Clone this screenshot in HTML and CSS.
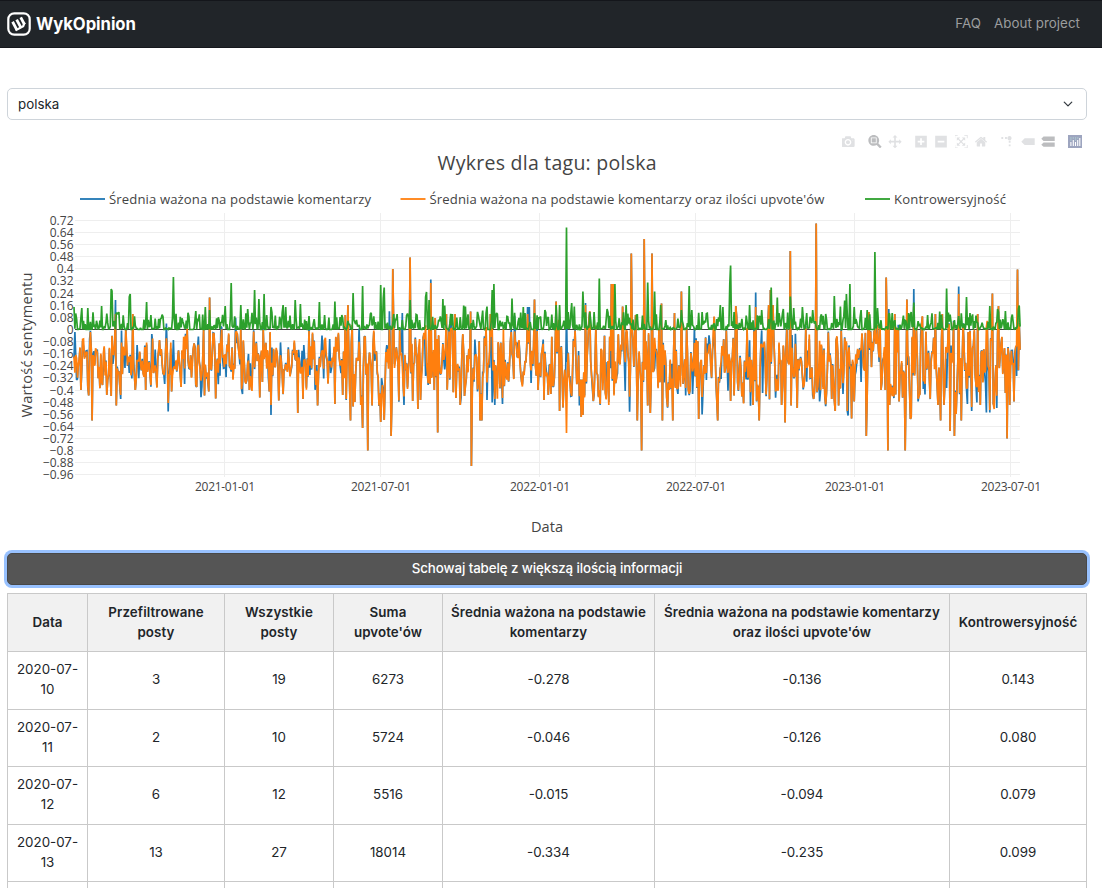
FILE: index.html
```html
<!DOCTYPE html>
<html lang="pl">
<head>
<meta charset="utf-8">
<title>WykOpinion</title>
<link rel="stylesheet" href="styles.css">
</head>
<body>
<nav class="navbar">
  <a class="brand">
    <svg class="brand-logo" viewBox="0 0 24 24"><rect x="1.3" y="1.3" width="21.4" height="21.4" rx="6" fill="none" stroke="#fff" stroke-width="2.2"/><g transform="rotate(-28 12 12)" fill="none" stroke="#fff" stroke-width="2.8"><path d="M7.4 7V16.4M12 7V16.4M16.6 7V15"/><path d="M6 16H14.6L17.6 13.4" stroke-width="2.2"/></g></svg>
    <span class="brand-name">WykOpinion</span>
  </a>
  <div class="nav-links"><a class="faq">FAQ</a><a class="about">About project</a></div>
</nav>
<main class="content">
  <div class="select"><span>polska</span><svg class="chevron" viewBox="0 0 16 16"><path d="m2 5 6 6 6-6" fill="none" stroke="#343a40" stroke-width="2" stroke-linecap="round" stroke-linejoin="round"/></svg></div>
  <section class="plot">
    <div class="modebar">
      <div class="group"><svg viewBox="0 0 1000 1000"><path transform="matrix(1 0 0 -1 0 850)" d="m500 450c-83 0-150-67-150-150 0-83 67-150 150-150 83 0 150 67 150 150 0 83-67 150-150 150z m400 150h-120c-16 0-34 13-39 29l-31 93c-6 15-23 28-40 28h-340c-16 0-34-13-39-28l-31-94c-6-15-23-28-40-28h-120c-55 0-100-45-100-100v-450c0-55 45-100 100-100h800c55 0 100 45 100 100v450c0 55-45 100-100 100z m-400-550c-138 0-250 112-250 250 0 138 112 250 250 250 138 0 250-112 250-250 0-138-112-250-250-250z m365 380c-19 0-35 16-35 35 0 19 16 35 35 35 19 0 35-16 35-35 0-19-16-35-35-35z"/></svg></div>
      <div class="group">
        <svg class="active" viewBox="0 0 1000 1000"><path transform="matrix(1 0 0 -1 0 850)" d="m1000-25l-250 251c40 63 63 138 63 218 0 224-182 406-407 406-224 0-406-182-406-406s183-406 407-406c80 0 155 22 218 62l250-250 125 125z m-812 250l0 438 437 0 0-438-437 0z m62 375l313 0 0-312-313 0 0 312z"/></svg>
        <svg viewBox="0 0 1000 1000"><path transform="matrix(1 0 0 -1 0 850)" d="m1000 350l-187 188 0-125-250 0 0 250 125 0-188 187-187-187 125 0 0-250-250 0 0 125-188-188 186-187 0 125 252 0 0-250-125 0 187-188 188 188-125 0 0 250 250 0 0-126 187 188z"/></svg>
      </div>
      <div class="group">
        <svg viewBox="0 0 875 1000"><path transform="matrix(1 0 0 -1 0 850)" d="m1 787l0-875 875 0 0 875-875 0z m687-500l-187 0 0-187-125 0 0 187-188 0 0 125 188 0 0 187 125 0 0-187 187 0 0-125z"/></svg>
        <svg viewBox="0 0 875 1000"><path transform="matrix(1 0 0 -1 0 850)" d="m0 788l0-876 876 0 0 876-876 0z m688-500l-500 0 0 125 500 0 0-125z"/></svg>
        <svg viewBox="0 0 1000 1000"><path transform="matrix(1 0 0 -1 0 850)" d="m250 850l-187 0-63 0 0-62 0-188 63 0 0 188 187 0 0 62z m688 0l-188 0 0-62 188 0 0-188 62 0 0 188 0 62-62 0z m-875-938l0 188-63 0 0-188 0-62 63 0 187 0 0 62-187 0z m875 188l0-188-188 0 0-62 188 0 62 0 0 62 0 188-62 0z m-125 188l-1 0-93-94-156 156 156 156 92-93 2 0 0 250-250 0 0-2 93-92-156-156-156 156 94 92 0 2-250 0 0-250 0 0 93 93 157-156-157-156-93 94 0 0 0-250 250 0 0 0-94 93 156 157 156-157-93-93 0 0 250 0 0 250z"/></svg>
        <svg viewBox="0 0 928.6 1000"><path transform="matrix(1 0 0 -1 0 850)" d="m786 296v-267q0-15-11-26t-25-10h-214v214h-143v-214h-214q-15 0-25 10t-11 26v267q0 1 0 2t0 2l321 264 321-264q1-1 1-4z m124 39l-34-41q-5-5-12-6h-2q-7 0-12 3l-386 322-386-322q-7-4-13-4-7 2-12 7l-35 41q-4 5-3 13t6 12l401 334q18 15 42 15t43-15l136-114v109q0 8 5 13t13 5h107q8 0 13-5t5-13v-227l122-102q5-5 6-12t-4-13z"/></svg>
      </div>
      <div class="group">
        <svg viewBox="0 0 1000 1000"><path transform="matrix(1.5 0 0 -1.5 0 850)" d="M512 409c0-57-46-104-103-104-57 0-104 47-104 104 0 57 47 103 104 103 57 0 103-46 103-103z m-327-39l92 0 0 92-92 0z m-185 0l92 0 0 92-92 0z m370-186l92 0 0 93-92 0z m0-184l92 0 0 92-92 0z"/></svg>
        <svg viewBox="0 0 1500 1000"><path transform="matrix(1 0 0 -1 0 850)" d="m375 725l0 0-375-375 375-374 0-1 1125 0 0 750-1125 0z"/></svg>
        <svg class="active" viewBox="0 0 1125 1000"><path transform="matrix(1 0 0 -1 0 850)" d="m187 786l0 2-187-188 188-187 0 0 937 0 0 373-938 0z m0-499l0 1-187-188 188-188 0 0 937 0 0 376-938-1z"/></svg>
      </div>
      <div class="group last"><svg class="plotly" viewBox="0 0 14 13"><rect width="14" height="13" fill="#9da5bf"/><path d="M2.9 7v4M5.3 5v6M7.5 7v4M9.7 5v6M11.8 3v8" stroke="#fff" stroke-width="1.1"/><path d="M2.3 3h1.2M2.3 5h1.2M4.7 3h1.2M7 3h1.1M7 5h1.1M9.2 3h1.1" stroke="#b3dcd8" stroke-width="1.1"/></svg></div>
    </div>
    <svg class="chart" id="chart" viewBox="0 150 1102 390" width="1102" height="390"></svg>
  </section>
  <button class="toggle">Schowaj tabelę z większą ilością informacji</button>
  <table class="data">
    <colgroup><col class="c1"><col class="c2"><col class="c3"><col class="c3"><col class="c5"><col class="c6"><col class="c7"></colgroup>
    <thead><tr><th>Data</th><th>Przefiltrowane posty</th><th>Wszystkie posty</th><th>Suma upvote'ów</th><th>Średnia ważona na podstawie komentarzy</th><th>Średnia ważona na podstawie komentarzy oraz ilości upvote'ów</th><th>Kontrowersyjność</th></tr></thead>
    <tbody>
      <tr><td>2020-07-10</td><td>3</td><td>19</td><td>6273</td><td>-0.278</td><td>-0.136</td><td>0.143</td></tr>
      <tr><td>2020-07-11</td><td>2</td><td>10</td><td>5724</td><td>-0.046</td><td>-0.126</td><td>0.080</td></tr>
      <tr><td>2020-07-12</td><td>6</td><td>12</td><td>5516</td><td>-0.015</td><td>-0.094</td><td>0.079</td></tr>
      <tr><td>2020-07-13</td><td>13</td><td>27</td><td>18014</td><td>-0.334</td><td>-0.235</td><td>0.099</td></tr>
      <tr class="cut"><td></td><td></td><td></td><td></td><td></td><td></td><td></td></tr>
    </tbody>
  </table>
</main>
<script src="chart.js"></script>
</body>
</html>
```

FILE: styles.css
```css
* { box-sizing: border-box; }
html, body { height: 888px; overflow: hidden; }
body { margin: 0; background: #fff; color: #212529; font: 400 13.33px/20px Inter, sans-serif; }
.navbar { height: 48px; background: #212529; border-top: 1px solid #14161b; border-bottom: 1px solid #16181d; padding: 0 22px 0 7px; display: flex; align-items: center; justify-content: space-between; }
.brand { display: flex; align-items: center; gap: 5px; }
.brand-logo { width: 24px; height: 24px; display: block; }
.brand-name { color: #fff; font-size: 16.67px; font-weight: 700; letter-spacing: -0.05px; }
.nav-links { display: flex; gap: 13px; color: #9b9d9e; font-weight: 400; padding-bottom: 2px; letter-spacing: 0.05px; }
.content { padding: 40px 15px 0 7px; }
.select { height: 32px; border: 1px solid #ced4da; border-radius: 5px; display: flex; align-items: center; justify-content: space-between; padding: 0 13px 1px 10px; }
.chevron { width: 10px; height: 10px; }
.plot { height: 433px; margin: 0 -15px 0 -7px; display: flex; flex-direction: column; }
.modebar { height: 30px; flex: none; display: flex; justify-content: flex-end; align-items: center; padding: 13.4px 17px 0 0; }
.group { display: flex; padding-left: 6.5px; }
.group.last { padding-left: 7.2px; }
.group svg { width: 20px; height: 13.3px; padding: 0 3.3px; display: block; fill: #e0e1e3; }
.group svg.active { fill: #bcbdbf; }
.group svg.plotly { width: 20px; height: 13px; padding: 0 3px; }
.chart { display: block; flex: none; }
.chart text { font-family: "Open Sans", sans-serif; fill: #444; }
.chart .title { font-size: 19.5px; }
.chart .axis-title { font-size: 14.6px; }
.chart .tick { font-size: 12px; }
.chart .legend { font-size: 13.1px; }
.chart .grid { stroke: #eee; stroke-width: 1; shape-rendering: crispEdges; }
.chart .zero { stroke: #444; stroke-width: 1; shape-rendering: crispEdges; }
.chart .line { fill: none; stroke-width: 1.7; stroke-linejoin: miter; stroke-miterlimit: 2; }
.toggle { display: block; width: 100%; height: 32px; border: 1px solid #484848; border-radius: 5px; background: #555; color: #fff; font: 500 13.33px/20px Inter, sans-serif; letter-spacing: -0.09px; padding: 0 0 2px; box-shadow: 0 0 0 3px #98c1fe; }
.data { width: 1080px; margin-top: 8px; border-collapse: collapse; table-layout: fixed; }
.data th, .data td { border: 1px solid #c9c9c9; text-align: center; vertical-align: middle; padding: 0 6px 2px; height: 57.6px; }
.data th { background: #f1f1f1; font-weight: 600; height: 58px; letter-spacing: 0.1px; }
.data .cut td { height: 6px; padding: 0; border-bottom: 0; }
.c1 { width: 80px; } .c2 { width: 137px; } .c3 { width: 109px; } .c5 { width: 212px; } .c6 { width: 295px; } .c7 { width: 137px; }
```

FILE: chart.js
```js
// Daily sentiment series; peaks are [x, y] pairs in chart units.
const greenPeaks = [[74,307],[82,308],[87.5,308],[102,306],[111.5,289],[112.3,291],[116,313],[119,312],[129,297],[130,294],[147,302],[151,315],[173,277],[196,311],[205,307],[210,310],[225,306],[231,283],[241,305],[248,309],[255,290],[259,299],[264.5,294],[271,307],[283.5,305],[286,307],[295.5,300],[300,304],[319,302],[324.5,315],[334.5,301.5],[342,315],[353,293],[363,286],[381,285],[383,298],[384.5,287.5],[397.5,314],[410.5,300],[417,315],[425.5,297],[426.5,292],[429,300],[442.5,299],[445,305.5],[452,314],[464,305.5],[465.5,306.5],[478.5,316],[482.5,310.5],[487,306.5],[492.5,290],[493.5,284],[512,298.5],[523,307],[544.5,310],[548,317],[556.5,305],[559.5,305],[566.5,227.5],[571.5,303],[574,306.5],[583,291.5],[589.5,312],[594,312],[599,278.5],[607.5,309],[614.5,284],[626,305],[647.5,282.5],[655,291.5],[660.5,305],[681,310],[689,286],[692,310],[702.5,312],[720,305],[723,307],[729.5,284],[731,265.5],[734,312],[750,305],[761.5,310],[771.5,287.5],[777,297.5],[783,309],[790,296.5],[794,308],[802.5,307],[807,313],[813,310],[820.5,317],[834.5,296],[840.5,306.5],[844.5,300.5],[846.5,294],[850,284],[854,307],[861.5,310],[867.5,310],[874.5,252],[877.5,308],[892.5,313],[909,313],[911,312],[913.5,302.5],[928,315],[940,311.5],[947,288.5],[959,316],[966.5,297],[970,313],[989.5,306],[997.5,309],[1005,311],[1018.5,309],[1019.5,305.5]];
const orangePeaks = [[132.5,314],[115.5,314],[210,297.5],[345,315],[348,305],[393,269],[410.5,257.5],[429,305],[431,283],[435,318],[446.5,314],[455,314],[470.5,311.5],[490.5,314],[527.5,314],[534.5,299.5],[556.5,301.5],[585.5,305],[611.5,284],[613.5,284],[622.5,306.5],[631,253.5],[635.5,315],[644,239],[652,253.5],[661.5,303.5],[681.5,291.5],[674.5,313],[735.5,306],[756,307],[768.5,305],[770.5,290],[773,305],[790,251],[816.5,223.5],[868.5,312],[886,277.5],[889,317],[894.5,314],[906.5,299.5],[913.5,307],[935,314],[942.5,314],[954.5,314],[959,294],[978,314],[992.5,293.5],[998.5,306],[1017.5,269.5],
[80.5,390],[89,395.5],[92.5,420.5],[102.5,385],[106.5,395],[111.5,396],[116.5,405.5],[120.5,395],[135.5,390],[146,390],[168.5,403],[172,391.5],[181.5,387],[196.5,387],[204.5,395.5],[209,391.5],[216,398.5],[249,390],[259.5,397.5],[262.5,382],[269,391.5],[271,405],[278.5,400.5],[298,413],[303,399],[318,405.5],[334.5,404],[343,395],[350.5,420.5],[353,406.5],[355,402],[361,405],[362.5,428],[368,450.5],[372.5,405.5],[381,422],[384.5,420],[391,436],[404,396.5],[412.5,401],[417.5,409],[420.5,400],[434.5,390],[438,432.5],[460,405],[456,398],[464.5,396],[471.5,466],[480.5,420.5],[482,420.5],[494.5,399],[502.5,398],[538,390],[544,400],[548,395],[551,394],[559.5,411],[563,407.5],[566.5,433],[571.5,396],[581,417],[582.5,415],[599,390],[608.5,405],[637,420.5],[641.5,450.5],[647.5,405.5],[650,413],[662.5,420.5],[669,390],[672.5,420.5],[688,390],[690,390],[698.5,419],[702.5,397],[717.5,420.5],[731,401],[734,395.5],[741.5,396.5],[753.5,405],[759,420.5],[782,405],[785.5,422.5],[791,405.5],[797.5,408],[813.5,399],[832,399],[835.5,411],[838.5,405.5],[847.5,411],[852,418.5],[854,401.5],[866,436],[881,390],[885,390],[888,450.5],[890,405],[899.5,401.5],[905,450.5],[910,419],[911.5,417],[919.5,394],[938,405],[941,420.5],[944,405],[950.5,431],[954,436],[956,414],[961,420.5],[972,407],[980,405],[990,410],[1005,393],[1007.5,438.5],[1009.5,405],[1014,401.5]];
const bluePeaks = [[75,332],[76.5,380],[115.5,300],[120.5,399],[129,373],[168.5,411.5],[152,334],[165,384],[173,340],[185,384],[271,415],[303.5,345],[330,339],[402.5,313],[404,405],[431,279.5],[426,376],[492.5,402.5],[495,405],[502.5,404],[527.5,307],[531,383],[566.5,312],[585.5,303],[608.5,402],[614,394],[625.5,391],[655,368],[683,384],[692.5,394],[702.5,414.5],[756,292.5],[763,393],[777,375],[819.5,401.5],[843,394],[848,415.5],[855,375],[861.5,382],[889,309],[913.5,289],[923,389],[947,388],[959,286.5],[972,411],[986,412.5],[990,412.5],[1017,376]];

let seed = 20200710;
const rnd = () => { seed = (seed * 1664525 + 1013904223) >>> 0; return seed / 4294967296; };
const X0 = 74, STEP = 0.864, N = 1096, ZERO = 329.5;
const green = [], orange = [], blue = [];
let level = 365;
for (let i = 0; i < N; i++) {
  const x = X0 + i * STEP;
  const late = x > 345;
  const spread = late ? 62 : 46;
  const target = 362 + (rnd() + rnd() - 1) * spread;
  const mix = 0.72;
  level = level * (1 - mix) + target * mix;
  let o = level;
  if (rnd() < (late ? 0.05 : 0.018)) o = 327 + rnd() * 6;
  orange.push(o);
  blue.push(o + (rnd() < 0.2 ? (rnd() - 0.5) * 36 : (rnd() - 0.5) * 4));
  const g = rnd();
  green.push(g < 0.28 ? ZERO : ZERO - Math.pow(rnd(), 2.5) * 17 - 0.6);
}
const at = x => Math.max(0, Math.min(N - 1, Math.round((x - X0) / STEP)));
orangePeaks.forEach(([x, y]) => { orange[at(x)] = y; blue[at(x)] = y; });
bluePeaks.forEach(([x, y]) => { blue[at(x)] = y; });
greenPeaks.forEach(([x, y]) => { green[at(x)] = y; });

const path = (a, c) => `<path class="line" stroke="${c}" d="M${a.map((y, i) => (X0 + i * STEP).toFixed(1) + ',' + y.toFixed(1)).join('L')}"/>`;
let out = '';
for (const x of [224, 380, 539, 695, 854, 1010]) out += `<path class="grid" d="M${x}.5 213V477"/>`;
for (let k = 9; k >= -12; k--) {
  const y = Math.floor(329.4 - k * 12.133) + 0.5;
  if (k) out += `<path class="grid" d="M75 ${y}H1020"/>`;
  const v = String(Math.round(k * 8) / 100).replace('-', '−');
  out += `<text class="tick" x="73.5" y="${y + 4}" text-anchor="end">${v}</text>`;
}
out += '<path class="zero" d="M75 329.5H1020"/>';
out += path(blue, '#1f77b4') + path(orange, '#ff7f0e') + path(green, '#2ca02c');
[['2021-01-01', 225], ['2021-07-01', 381], ['2022-01-01', 540], ['2022-07-01', 696], ['2023-01-01', 855], ['2023-07-01', 1011]]
  .forEach(([t, x]) => { out += `<text class="tick" x="${x}" y="491" text-anchor="middle" textLength="60">${t}</text>`; });
[['Średnia ważona na podstawie komentarzy', 80, '#1f77b4', 262], ["Średnia ważona na podstawie komentarzy oraz ilości upvote'ów", 400.5, '#ff7f0e', 395], ['Kontrowersyjność', 865, '#2ca02c', 112]]
  .forEach(([t, x, c, w]) => { out += `<path d="M${x} 199H${x + 25}" stroke="${c}" stroke-width="1.8"/><text class="legend" x="${x + 29}" y="204" textLength="${w}">${t}</text>`; });
out += '<text class="title" x="547" y="170" text-anchor="middle" textLength="219">Wykres dla tagu: polska</text>';
out += '<text class="axis-title" x="547" y="532" text-anchor="middle" textLength="32">Data</text>';
out += '<text class="axis-title" transform="translate(32 345) rotate(-90)" text-anchor="middle" textLength="145">Wartość sentymentu</text>';
document.getElementById('chart').innerHTML = out;
```
